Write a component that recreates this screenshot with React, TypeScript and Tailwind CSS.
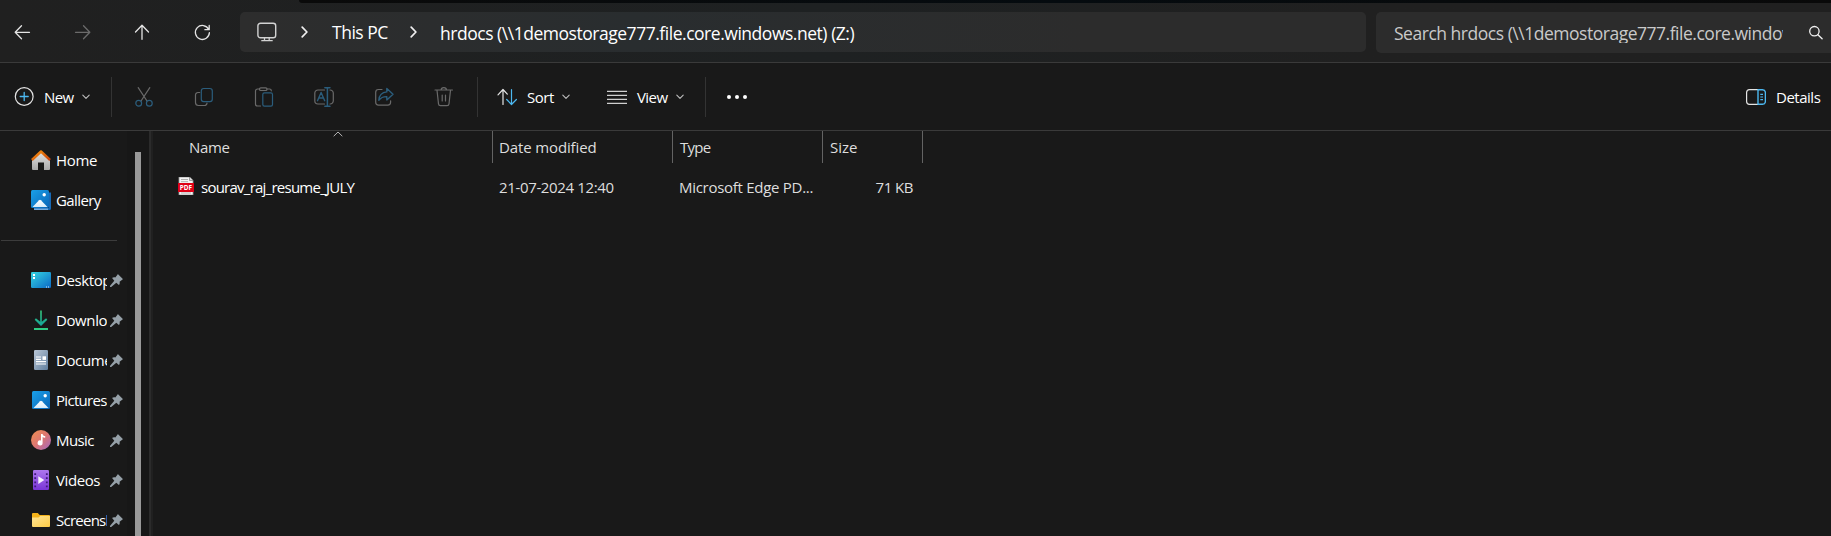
import type { ReactNode } from "react";

type IconProps = { className?: string; children: ReactNode; box?: string };

function Icon({ className = "size-5", children, box = "0 0 20 20" }: IconProps) {
  return (
    <svg
      viewBox={box}
      className={`shrink-0 ${className}`}
      fill="none"
      strokeWidth={1.2}
      strokeLinecap="round"
      strokeLinejoin="round"
    >
      {children}
    </svg>
  );
}

const LIGHT = "#e4e4e4";
const DIM = "#6a6a6a";
const DIM_BLUE = "#2b5d7c";
const BLUE = "#4cb8f0";

function Chevron() {
  return (
    <Icon className="h-5 w-2" box="0 0 8 20">
      <path d="M1.2 5.2 5.9 10l-4.7 4.8" stroke="#f0f0f0" strokeWidth={1.7} />
    </Icon>
  );
}

function CaretDown() {
  return (
    <Icon className="h-5 w-2" box="0 0 8 20">
      <path d="M.8 8.2 4 11.4l3.200-3.200" stroke="#bdbdbd" strokeWidth={1.1} />
    </Icon>
  );
}

function AddressBar() {
  return (
    <header className="flex h-[62px] shrink-0 flex-col bg-linear-to-r from-[#202020] via-[#1e2122] via-45% to-[#202020] to-75%">
      <div className="ml-[299px] h-[3px] shrink-0 rounded-bl bg-linear-to-r from-[#0a0a0a] via-[#050b0f] to-[#090909]" />
      <div className="mt-[9px] flex h-[41px] items-start">
        <div className="flex h-10 w-[240px] shrink-0 items-center pl-[13px]">
          <Icon>
            <path d="M16.500 10.300H2.300M8.500 3.800 2.200 10.300l6.300 6.500" stroke={LIGHT} strokeWidth={1.3} />
          </Icon>
          <Icon className="ml-10 size-5">
            <path d="M2.500 10.300h14.200M10.500 3.800l6.300 6.500-6.300 6.500" stroke="#6b6b6b" strokeWidth={1.3} />
          </Icon>
          <Icon className="ml-10 size-5">
            <path d="M9 17.300V3.500M2.500 10 9 3.300 15.500 10" stroke={LIGHT} strokeWidth={1.3} />
          </Icon>
          <Icon className="ml-10 size-5">
            <path
              d="M15.700 7.400A7 7 0 1 0 16.400 10.600M16.200 3.400v4.300h-4.300"
              stroke={LIGHT}
              strokeWidth={1.3}
            />
          </Icon>
        </div>
        <div className="flex h-10 w-[1126px] shrink-0 items-center rounded-[5px] bg-linear-to-r from-[#2d2d2d] via-[#292d2f] via-35% to-[#2c2c2c] to-75% pl-[17px] text-[17.5px] text-white">
          <Icon>
            <rect x=".9" y="1.200" width="17.800" height="14.600" rx="2.600" stroke="#d2d2d2" strokeWidth={1.4} />
            <path d="M7.500 16v2.300M12.200 16v2.300M4.800 18.700h10.400" stroke="#d2d2d2" strokeWidth={1.300} />
          </Icon>
          <div className="ml-6">
            <Chevron />
          </div>
          <span className="ml-[23px] w-[57px] whitespace-nowrap tracking-[-0.48px]">This PC</span>
          <div className="ml-[21px]">
            <Chevron />
          </div>
          <span className="mt-[2px] ml-[22px] whitespace-nowrap tracking-[-0.47px]">
            {"hrdocs (\\\\1demostorage777.file.core.windows.net) (Z:)"}
          </span>
        </div>
        <div className="ml-[10px] flex h-[41px] min-w-0 flex-1 items-center rounded-l-[5px] bg-[#2c2c2c] pl-[18px] text-[17.500px] text-[#c9c9c9]">
          <span className="mt-px w-[389px] shrink-0 overflow-hidden whitespace-nowrap tracking-[-0.48px]">
            {"Search hrdocs (\\\\1demostorage777.file.core.windows.net) (Z:)"}
          </span>
          <Icon className="ml-[25px] size-4" box="0 0 16 16">
            <circle cx="6.400" cy="6.200" r="4.700" stroke="#f0f0f0" strokeWidth={1.300} />
            <path d="m9.900 9.800 4.200 4" stroke="#f0f0f0" strokeWidth={1.400} />
          </Icon>
        </div>
      </div>
    </header>
  );
}

function Separator() {
  return <div className="h-10 w-px shrink-0 bg-[#333333]" />;
}

function CommandBar() {
  return (
    <div className="flex h-[69px] shrink-0 items-center border-y border-[#3a3a3a] bg-[#191919] pl-[14px] text-[15px] whitespace-nowrap text-white">
      <Icon>
        <circle cx="10.200" cy="9.500" r="8.900" stroke={LIGHT} strokeWidth={1.200} />
        <path d="M10.200 5.500v8M6.200 9.500h8" stroke={BLUE} strokeWidth={1.300} />
      </Icon>
      <span className="ml-[10px] w-[31px] tracking-[-0.6px]">New</span>
      <div className="ml-[7px]">
        <CaretDown />
      </div>
      <div className="ml-[21px]">
        <Separator />
      </div>
      <div className="flex items-center gap-10 pl-[22px]">
        <Icon>
          <path d="M4.200.7 13 14M15.800.7 7 14" stroke={DIM} />
          <circle cx="4.700" cy="16.200" r="2.900" stroke={DIM_BLUE} />
          <circle cx="15.300" cy="16.200" r="2.900" stroke={DIM_BLUE} />
        </Icon>
        <Icon>
          <path d="M5.700 5.500H4A2.500 2.500 0 0 0 1.500 8v7.500A3 3 0 0 0 4.500 18.500h6a2.500 2.500 0 0 0 2.500-2.500" stroke={DIM} />
          <rect x="7.300" y="1.500" width="11" height="13.200" rx="2.400" stroke={DIM_BLUE} />
        </Icon>
        <Icon>
          <path d="M5.500 2H3.500A2 2 0 0 0 1.500 4v13a2 2 0 0 0 2 2h3M13 2h2.500a1.800 1.800 0 0 1 1.800 1.800" stroke={DIM} />
          <rect x="5.500" y=".8" width="7.500" height="2.700" rx="1.300" stroke={DIM} />
          <rect x="8.800" y="5.900" width="9.700" height="13.200" rx="1.600" stroke={DIM_BLUE} />
        </Icon>
        <Icon>
          <path d="M10.500 3H4A3.200 3.200 0 0 0 .8 6.200v7.600A3.200 3.200 0 0 0 4 17h6.500M16 3a3.200 3.200 0 0 1 3.300 3.200v7.600A3.200 3.200 0 0 1 16 17" stroke={DIM} />
          <path d="m3.500 13.700 3.600-8.200 3.600 8.200M4.800 11h4.600" stroke={DIM_BLUE} strokeWidth={1.400} />
          <path d="M10.900.7h5M10.900 19.300h5M13.400.7v18.600" stroke={DIM_BLUE} strokeWidth={1.500} />
        </Icon>
        <Icon>
          <path d="M8 2.500H4.500A2.800 2.800 0 0 0 1.700 5.300v10a2.800 2.800 0 0 0 2.800 2.800h9.300a2.800 2.800 0 0 0 2.800-2.800v-1.500" stroke={DIM} />
          <path
            d="M12.800 1.500 19 7.200l-6.200 5.700V9.600c-3.800-.2-5.900 1-8 3.600.3-4.200 3-7.800 8-8.300Z"
            stroke={DIM_BLUE}
            strokeWidth={1.400}
          />
        </Icon>
        <Icon>
          <path d="M1 3h17.500M3 3.200l1.500 13.700a2 2 0 0 0 2 1.800H13a2 2 0 0 0 2-1.800l1.500-13.700M7.200 2.800a2.600 2.200 0 0 1 5.200 0M8.200 8v6M11.500 8v6" stroke={DIM} />
        </Icon>
      </div>
      <div className="ml-[23px]">
        <Separator />
      </div>
      <Icon className="ml-[19px] size-5">
        <path d="M6 17.500V2.700M1 7.800l5-5.300 4.300 4.600" stroke={LIGHT} />
        <path d="M14.500 2.500v14.800M9.700 12.500l4.800 5 4.900-5" stroke={BLUE} />
      </Icon>
      <span className="ml-[10px] w-[28px] tracking-[-0.47px]">Sort</span>
      <div className="ml-[7px]">
        <CaretDown />
      </div>
      <Icon className="ml-[37px] size-5">
        <path d="M0 4.300h20M0 8.300h20M0 12.300h20M0 16.300h20" stroke="#cfcfcf" strokeWidth={1.300} strokeLinecap="butt" />
      </Icon>
      <span className="ml-[10px] w-[32px] tracking-[-0.57px]">View</span>
      <div className="ml-[7px]">
        <CaretDown />
      </div>
      <div className="ml-[21px]">
        <Separator />
      </div>
      <div className="mt-px ml-[21px] flex gap-1">
        <span className="size-1 rounded-full bg-white" />
        <span className="size-1 rounded-full bg-white" />
        <span className="size-1 rounded-full bg-white" />
      </div>
      <Icon className="ml-auto size-5">
        <path d="M12 2.700H3.500A3 3 0 0 0 .6 5.600v8.800a3 3 0 0 0 2.900 2.900H12" stroke={LIGHT} />
        <path d="M12 2.700h4.500a3 3 0 0 1 2.900 2.900v8.800a3 3 0 0 1-2.900 2.900H12Z" stroke={BLUE} strokeWidth={1.400} />
        <path d="M14.300 7.300h2.700M14.300 10h2.700M14.300 12.700h2.700" stroke={BLUE} strokeLinecap="butt" />
      </Icon>
      <span className="ml-[10px] w-[55px] tracking-[-0.48px]">Details</span>
    </div>
  );
}

function PictureGlyph({ id }: { id: string }) {
  return (
    <>
      <defs>
        <linearGradient id={id} x1="0" y1="0" x2="1" y2="1">
          <stop offset="0" stopColor="#1aa0e8" />
          <stop offset="1" stopColor="#0a66b8" />
        </linearGradient>
        <linearGradient id={`${id}m`} x1="0" y1="0" x2="0" y2="1">
          <stop offset="0" stopColor="#ffffff" />
          <stop offset="1" stopColor="#d6ecfb" />
        </linearGradient>
      </defs>
      <rect width="18" height="18" rx="1.500" fill={`url(#${id})`} />
      <path d="m1.500 17 6.600-6.700a1.300 1.300 0 0 1 1.800 0l6.600 6.700Z" fill={`url(#${id}m)`} />
      <circle cx="13.200" cy="4.700" r="1.700" fill="#fff" />
    </>
  );
}

const glyphs: Record<string, ReactNode> = {
  Home: (
    <Icon>
      <defs>
        <linearGradient id="wall" x1="0" y1="0" x2="0" y2="1">
          <stop offset="0" stopColor="#e4e4e4" />
          <stop offset="1" stopColor="#a9a9a9" />
        </linearGradient>
        <linearGradient id="roof" x1="0" y1="0" x2="1" y2="1">
          <stop offset="0" stopColor="#f7930c" />
          <stop offset="1" stopColor="#c7400d" />
        </linearGradient>
      </defs>
      <path d="M10 1.500 1 10.500V19a1 1 0 0 0 1 1h5v-7.500h6V20h5a1 1 0 0 0 1-1v-8.500Z" fill="url(#wall)" />
      <path d="M.9 10 10 1.500l9.100 8.500" stroke="url(#roof)" strokeWidth={2.400} strokeLinecap="butt" />
    </Icon>
  ),
  Gallery: (
    <Icon>
      <path d="M3 20h15.500a1.500 1.500 0 0 0 1.500-1.500V2.500h-2V18H3Z" fill="#1769b5" />
      <path d="M3 18.500h14V20H3Z" fill="#72a9dc" />
      <PictureGlyph id="gal" />
    </Icon>
  ),
  Desktop: (
    <Icon>
      <defs>
        <linearGradient id="desk" x1="0" y1="0" x2="1" y2="1">
          <stop offset="0" stopColor="#35d6e3" />
          <stop offset="1" stopColor="#0b68c4" />
        </linearGradient>
      </defs>
      <rect y="2" width="20" height="16" rx="1.200" fill="url(#desk)" />
      <path d="M2 4h2v2H2ZM2 7h2v2H2Z" fill="#fff" />
      <path d="M15 16.500h1v1h-1ZM17 16.500h1v1h-1Z" fill="#d8ecff" />
    </Icon>
  ),
  Downloads: (
    <Icon>
      <defs>
        <linearGradient id="down" gradientUnits="userSpaceOnUse" x1="0" y1="1" x2="0" y2="16">
          <stop offset="0" stopColor="#35c77c" />
          <stop offset="1" stopColor="#14a39a" />
        </linearGradient>
      </defs>
      <path d="M9.200.5h1.600v11.300l4.300-3.600 1.200 1.500L10 16 3.700 9.700l1.200-1.500 4.300 3.600Z" fill="url(#down)" />
      <path d="M3 18h14v2H3Z" fill="#2fcc83" />
    </Icon>
  ),
  Documents: (
    <Icon>
      <defs>
        <linearGradient id="doc" x1="0" y1="0" x2="1" y2="1">
          <stop offset="0" stopColor="#bac7d6" />
          <stop offset="1" stopColor="#607f9f" />
        </linearGradient>
      </defs>
      <rect x="3" width="14" height="20" rx="1.300" fill="url(#doc)" />
      <path d="M5 7h5M5 9.300h5M5 11.700h10M5 14h10" stroke="#fff" strokeWidth={1.200} strokeLinecap="butt" />
      <path d="M11.500 6.300H15V9.900h-3.500Z" fill="#fff" />
    </Icon>
  ),
  Pictures: (
    <Icon box="-1 -1 20 20">
      <PictureGlyph id="pic" />
    </Icon>
  ),
  Music: (
    <Icon>
      <defs>
        <linearGradient id="mus" x1="0" y1="0" x2="1" y2="1">
          <stop offset="0" stopColor="#f0904f" />
          <stop offset=".5" stopColor="#dc7672" />
          <stop offset="1" stopColor="#a168c4" />
        </linearGradient>
      </defs>
      <circle cx="10" cy="10" r="10" fill="url(#mus)" />
      <path d="M10 4h1.600c.2 1.200 1 2 2.600 2.100v1.700c-1 .1-1.900-.2-2.600-.7v5.700A2.500 2.500 0 1 1 10 10.600Z" fill="#fff" />
    </Icon>
  ),
  Videos: (
    <Icon>
      <defs>
        <linearGradient id="vid" x1="0" y1="0" x2="0" y2="1">
          <stop offset="0" stopColor="#ad77ee" />
          <stop offset="1" stopColor="#7a35d6" />
        </linearGradient>
      </defs>
      <rect x="2" width="16" height="20" rx="1.300" fill="url(#vid)" />
      <path d="M4.200 3.200v15M15.800 3.200v15" stroke="#40187e" strokeWidth={1.800} strokeDasharray="1.800 2.300" strokeLinecap="butt" />
      <path d="m7.300 6.200 6 3.900-6 3.900Z" fill="#f5effd" />
    </Icon>
  ),
  Screenshots: (
    <Icon>
      <defs>
        <linearGradient id="fold" x1="0" y1="0" x2="1" y2="1">
          <stop offset="0" stopColor="#ffe597" />
          <stop offset="1" stopColor="#fdcb45" />
        </linearGradient>
      </defs>
      <path d="M1 4.200C1 3.500 1.500 3 2.200 3h4.600l1.900 2H18a1 1 0 0 1 1 1v3H1Z" fill="#f5b31a" />
      <path d="M1 7.500h6.500L9.200 6H19v10a1 1 0 0 1-1 1H2a1 1 0 0 1-1-1Z" fill="url(#fold)" />
    </Icon>
  ),
};

function Pin() {
  return (
    <Icon className="size-[13px]" box="0 0 13 13">
      <path
        d="M8.300.5 12.600 4.800c.4.500.1.900-.4.900L9.600 7.700c.3 1.700 0 2.500-.7 3.200L6.300 8.700 1.200 13 0 12.900l.1-1.200 4.200-5-2.200-2.600c.7-.7 1.600-1 3.200-.7L7.300 1C7.300.3 7.900 0 8.300.5Z"
        fill="#95a0a8"
      />
    </Icon>
  );
}

type NavItemProps = { name: string; tracking: string; pinned?: boolean };

function NavItem({ name, tracking, pinned }: NavItemProps) {
  return (
    <div className="flex h-10 items-center pl-[31px]">
      {glyphs[name]}
      <span
        className={`ml-[5px] shrink-0 overflow-hidden whitespace-nowrap ${pinned ? "w-[51px]" : "w-[60px]"} ${tracking}`}
      >
        {name}
      </span>
      {pinned && (
        <div className="ml-[3px]">
          <Pin />
        </div>
      )}
    </div>
  );
}

function Sidebar() {
  return (
    <aside className="flex w-[153px] shrink-0 overflow-hidden">
      <nav className="w-[127px] shrink-0 bg-[#191919] pt-[9px] text-[15px] text-white">
        <NavItem name="Home" tracking="tracking-[-0.33px]" />
        <NavItem name="Gallery" tracking="tracking-[-0.6px]" />
        <div className="flex h-10 items-center">
          <div className="ml-px h-px w-[116px] bg-[#3c3c3c]" />
        </div>
        <NavItem name="Desktop" tracking="tracking-[-0.4px]" pinned />
        <NavItem name="Downloads" tracking="tracking-[-0.4px]" pinned />
        <NavItem name="Documents" tracking="tracking-[-0.4px]" pinned />
        <NavItem name="Pictures" tracking="tracking-[-0.7px]" pinned />
        <NavItem name="Music" tracking="tracking-[-0.6px]" pinned />
        <NavItem name="Videos" tracking="tracking-[-0.4px]" pinned />
        <NavItem name="Screenshots" tracking="tracking-[-0.75px]" pinned />
      </nav>
      <div className="w-[22px] shrink-0 bg-[#171717] pt-[21px] pl-2">
        <div className="h-full w-[6px] bg-[#999999]" />
      </div>
      <div className="w-1 shrink-0 border-l-2 border-[#2b2b2b] bg-[#202020]" />
    </aside>
  );
}

function PdfIcon() {
  return (
    <svg viewBox="0 0 16 18" className="h-[18px] w-4 shrink-0">
      <path d="M1 0h10.500L15 3.500V18H1Z" fill="#f4f4f4" stroke="#9a9a9a" strokeWidth=".8" />
      <path d="M11.500 0v3.500H15" fill="#d8d8d8" stroke="#8a8a8a" strokeWidth=".8" />
      <path d="M3 2.500h7M3 4.700h7M3 16h10" stroke="#a8a8a8" strokeWidth=".9" />
      <rect y="6" width="16" height="9" fill="#e00016" />
      <text
        x="8"
        y="12.900"
        textAnchor="middle"
        fontSize="6.400"
        fontWeight="700"
        fill="#fff"
        className="font-['Open_Sans',sans-serif]"
      >
        PDF
      </text>
    </svg>
  );
}

function FileList() {
  return (
    <main className="min-w-0 flex-1 bg-[#191919] text-[15px] whitespace-nowrap text-[#dedede]">
      <div className="flex h-8 items-center">
        <div className="relative flex h-8 w-[340px] items-center border-r border-[#636363] pl-[36px]">
          <span className="tracking-[-0.3px]">Name</span>
          <svg viewBox="0 0 10 6" className="absolute top-0 left-[179.500px] h-[6px] w-[10px]" fill="none">
            <path d="M.7 5.200 5 1l4.300 4.200" stroke="#b5b5b5" />
          </svg>
        </div>
        <div className="flex h-8 w-[180px] items-center border-r border-[#636363] pl-[6px] tracking-[-0.13px]">
          Date modified
        </div>
        <div className="flex h-8 w-[150px] items-center border-r border-[#636363] pl-[7px] tracking-[-0.75px]">
          Type
        </div>
        <div className="flex h-8 w-[100px] items-center border-r border-[#636363] pl-[7px]">Size</div>
      </div>
      <div className="mt-1 flex h-10 items-center">
        <div className="flex w-[340px] items-center pl-[25px] text-white">
          <div className="-mt-[3px]">
            <PdfIcon />
          </div>
          <span className="ml-[7px] tracking-[-0.75px]">sourav_raj_resume_JULY</span>
        </div>
        <div className="w-[180px] pl-[6px] tracking-[-0.35px]">21-07-2024 12:40</div>
        <div className="w-[150px] pl-[6px] tracking-[-0.28px]">Microsoft Edge PD...</div>
        <div className="w-[90px] text-right tracking-[-0.5px]">71 KB</div>
      </div>
    </main>
  );
}

export default function App() {
  return (
    <div className="flex h-[536px] w-full flex-col overflow-hidden bg-[#191919] font-['Open_Sans','Noto_Sans',sans-serif] leading-[20px]">
      <AddressBar />
      <CommandBar />
      <div className="flex min-h-0 flex-1">
        <Sidebar />
        <FileList />
      </div>
    </div>
  );
}
